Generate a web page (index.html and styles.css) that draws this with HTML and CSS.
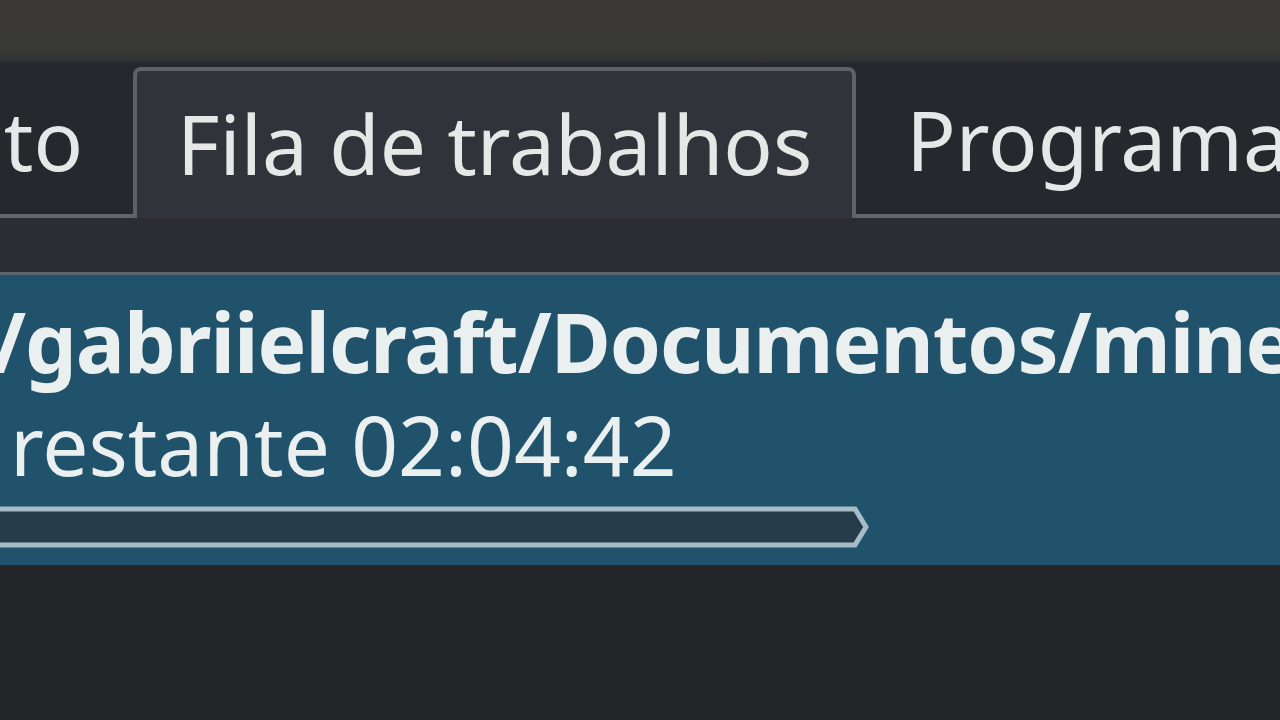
FILE: index.html
```html
<!DOCTYPE html>
<html lang="pt">
<head>
  <meta charset="UTF-8">
  <meta name="viewport" content="width=device-width, initial-scale=1">
  <title>Fila de trabalhos</title>
  <link rel="stylesheet" href="styles.css">
</head>
<body>
  <div class="titlebar"></div>

  <div class="tabs">
    <div class="tab">Projeto</div>
    <div class="tab active">Fila de trabalhos</div>
    <div class="tab">Programação</div>
  </div>

  <div class="gap"></div>

  <div class="job">
    <div class="job-path">/gabriielcraft/Documentos/minecraft.mp4</div>
    <div class="job-status">restante 02:04:42</div>
    <svg class="progress" width="880" height="44" viewBox="0 0 880 44">
      <path d="M-10 4 H855 L866 22 L855 40 H-10 Z" fill="#263c4a" stroke="#a6bcc8" stroke-width="5"/>
    </svg>
  </div>

  <div class="rest"></div>
</body>
</html>
```

FILE: styles.css
```css
* {
  margin: 0;
  padding: 0;
  box-sizing: border-box;
}
body {
  width: 1280px;
  height: 720px;
  overflow: hidden;
  background-color: #232529;
  font-family: "Noto Sans", sans-serif;
  color: #eaeff0;
}
.titlebar {
  height: 62px;
  background: linear-gradient(#3a3935 0%, #383835 80%, #2f3034 100%);
}
.tabs {
  height: 156px;
  display: flex;
  align-items: flex-end;
  background-color: #26282d;
  margin-left: -245px;
  white-space: nowrap;
}
.tab {
  height: 151px;
  padding: 0 50px;
  font-size: 82px;
  line-height: 144px;
  color: #e6e8e8;
  border-bottom: 4px solid #62666c;
}
.tab.active {
  padding: 0 40px;
  background-color: #30333a;
  border: 4px solid #5d6168;
  border-bottom: none;
  border-radius: 8px 8px 0 0;
}
.gap {
  height: 54px;
  background-color: #2b2d33;
}
.job {
  height: 293px;
  background-color: #21526b;
  border-top: 3px solid #5f656c;
  padding-top: 18px;
  white-space: nowrap;
  overflow: hidden;
}
.job-path {
  font-size: 82px;
  font-weight: bold;
  line-height: 96px;
  letter-spacing: -1px;
  margin-left: -8px;
}
.job-status {
  font-size: 82px;
  line-height: 110px;
  margin-left: 10px;
}
.progress {
  display: block;
  margin-top: 6px;
}
```
